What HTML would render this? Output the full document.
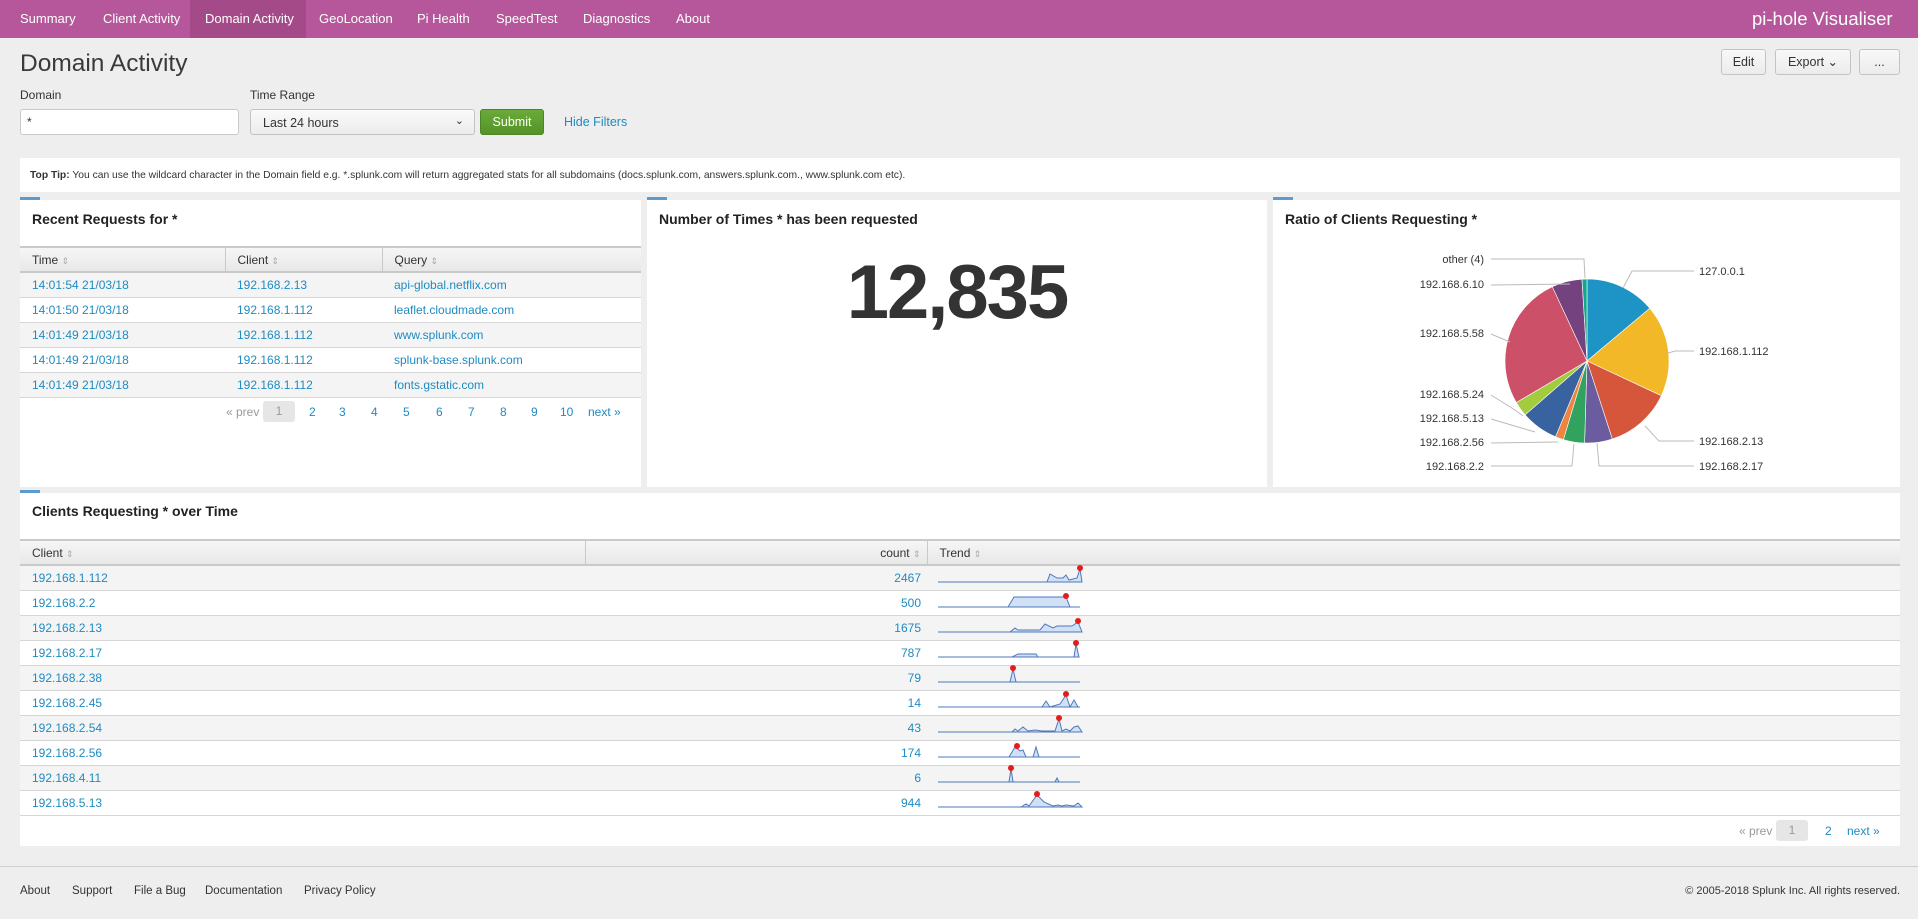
<!DOCTYPE html>
<html><head><meta charset="utf-8"><style>
*{margin:0;padding:0;box-sizing:border-box}
body{width:1918px;height:919px;background:#eeeeee;font-family:"Liberation Sans",sans-serif;color:#333;position:relative;overflow:hidden}
.a{position:absolute;white-space:nowrap}
.nav{left:0;top:0;width:1918px;height:38px;background:#b5579a}
.nav span{position:absolute;top:0;line-height:38px;color:#fff;font-size:13px}
.btn{position:absolute;border:1px solid #c3c3c3;border-radius:3px;background:linear-gradient(#f8f8f8,#ececec);font-size:12.5px;text-align:center;line-height:25px;color:#333}
.panel{position:absolute;background:#fff}
.panel:before{content:"";position:absolute;left:0;top:-3px;width:20px;height:3px;background:#5c9bd0}
.pt{position:absolute;left:12px;font-weight:bold;font-size:14px;color:#222}
.lnk{color:#1e8bc3}
table{border-collapse:collapse;position:absolute;font-size:12px}
th{height:25px;text-align:left;font-weight:normal;background:linear-gradient(#f6f6f6,#e8e8e8);border-top:2px solid #c9c9c9;border-bottom:2px solid #c9c9c9;border-left:1px solid #c9c9c9;color:#333;padding-left:12px}
th:first-child{border-left:none}
td{height:25px;border-bottom:1px solid #d6d6d6;color:#1e8bc3;padding-left:12px}
tr:nth-child(even) td{background:#f4f4f4}
.s{color:#aaa;font-size:9px}
.pg{position:absolute;font-size:12px;color:#1e8bc3}
.pg .c{position:absolute;top:-4px;width:32px;height:21px;background:#e6e6e6;border-radius:3px;color:#999;text-align:center;line-height:21px}
.foot span{position:absolute;top:885px;font-size:11.5px;color:#333}
</style></head><body>
<div class="a nav">
<div class="a" style="left:190px;top:0;width:116px;height:38px;background:#a54a89"></div>
<span style="left:20px">Summary</span>
<span style="left:103px">Client Activity</span>
<span style="left:205px">Domain Activity</span>
<span style="left:319px">GeoLocation</span>
<span style="left:417px">Pi Health</span>
<span style="left:496px">SpeedTest</span>
<span style="left:583px">Diagnostics</span>
<span style="left:676px">About</span>
<span style="left:1752px;font-size:18.5px">pi-hole Visualiser</span>
</div>
<div class="a" style="left:20px;top:50px;font-size:24.5px;color:#3a3a3a;font-weight:300">Domain Activity</div>
<div class="btn" style="left:1721px;top:49px;width:45px;height:26px">Edit</div>
<div class="btn" style="left:1775px;top:49px;width:76px;height:26px">Export &#8964;</div>
<div class="btn" style="left:1859px;top:49px;width:41px;height:26px">...</div>
<div class="a" style="left:20px;top:88px;font-size:12px">Domain</div>
<div class="a" style="left:250px;top:88px;font-size:12px">Time Range</div>
<div class="a" style="left:20px;top:109px;width:219px;height:26px;background:#fff;border:1px solid #c9c9c9;border-radius:3px;font-size:12px;padding:5px 6px">*</div>
<div class="a" style="left:250px;top:109px;width:225px;height:26px;background:linear-gradient(#fafafa,#ececec);border:1px solid #c3c3c3;border-radius:3px;font-size:12.5px;padding:6px 12px">Last 24 hours<span style="position:absolute;right:10px;top:4px;font-size:11px">&#8964;</span></div>
<div class="a" style="left:480px;top:109px;width:64px;height:26px;background:linear-gradient(#6aab3a,#559328);border:1px solid #4a8526;border-radius:3px;color:#fff;font-size:12.5px;text-align:center;line-height:24px">Submit</div>
<div class="a lnk" style="left:564px;top:115px;font-size:12.5px">Hide Filters</div>
<div class="a" style="left:20px;top:158px;width:1880px;height:34px;background:#fff;font-size:10.3px;padding:12px 10px;color:#333"><b>Top Tip:</b> You can use the wildcard character in the Domain field e.g. *.splunk.com will return aggregated stats for all subdomains (docs.splunk.com, answers.splunk.com., www.splunk.com etc).</div>

<div class="panel" style="left:20px;top:200px;width:621px;height:287px">
<div class="pt" style="top:11px">Recent Requests for *</div>
<table style="left:0;top:46px;width:621px">
<tr><th style="width:205px">Time <span class="s">&#8661;</span></th><th style="width:157px">Client <span class="s">&#8661;</span></th><th>Query <span class="s">&#8661;</span></th></tr>
<tr><td>14:01:54 21/03/18</td><td>192.168.2.13</td><td>api-global.netflix.com</td></tr>
<tr><td>14:01:50 21/03/18</td><td>192.168.1.112</td><td>leaflet.cloudmade.com</td></tr>
<tr><td>14:01:49 21/03/18</td><td>192.168.1.112</td><td>www.splunk.com</td></tr>
<tr><td>14:01:49 21/03/18</td><td>192.168.1.112</td><td>splunk-base.splunk.com</td></tr>
<tr><td>14:01:49 21/03/18</td><td>192.168.1.112</td><td>fonts.gstatic.com</td></tr>
</table>
<div class="pg" style="left:0;top:205px;width:621px">
<span class="a" style="left:206px;color:#999">« prev</span>
<span class="c" style="left:243px">1</span>
<span class="a" style="left:289px">2</span><span class="a" style="left:319px">3</span><span class="a" style="left:351px">4</span><span class="a" style="left:383px">5</span><span class="a" style="left:416px">6</span><span class="a" style="left:448px">7</span><span class="a" style="left:480px">8</span><span class="a" style="left:511px">9</span><span class="a" style="left:540px">10</span><span class="a" style="left:568px">next »</span>
</div>
</div>

<div class="panel" style="left:647px;top:200px;width:620px;height:287px">
<div class="pt" style="top:11px">Number of Times * has been requested</div>
<div class="a" style="left:0;width:620px;text-align:center;top:49px;font-size:76px;font-weight:bold;letter-spacing:-2px;color:#333">12,835</div>
</div>

<div class="panel" style="left:1273px;top:200px;width:627px;height:287px">
<div class="pt" style="top:11px">Ratio of Clients Requesting *</div>
<svg class="a" style="left:0;top:-2px" width="627" height="289" viewBox="0 0 627 289">
<g stroke="#fff" stroke-width="0.6">
<path d="M314,163 L314,81 A82,82 0 0 1 376.8,110.3Z" fill="#1e93c6"/>
<path d="M314,163 L376.8,110.3 A82,82 0 0 1 388.3,197.7Z" fill="#f2b827"/>
<path d="M314,163 L388.3,197.7 A82,82 0 0 1 339.3,241Z" fill="#d6563c"/>
<path d="M314,163 L339.3,241 A82,82 0 0 1 311.6,245Z" fill="#6a5c9e"/>
<path d="M314,163 L311.6,245 A82,82 0 0 1 290.4,241.6Z" fill="#31a35f"/>
<path d="M314,163 L290.4,241.6 A82,82 0 0 1 282.5,238.7Z" fill="#ed8440"/>
<path d="M314,163 L282.5,238.7 A82,82 0 0 1 252.1,216.8Z" fill="#3863a0"/>
<path d="M314,163 L252.1,216.8 A82,82 0 0 1 243.3,204.5Z" fill="#a2cc3e"/>
<path d="M314,163 L243.3,204.5 A82,82 0 0 1 279.3,88.7Z" fill="#cc5068"/>
<path d="M314,163 L279.3,88.7 A82,82 0 0 1 309,81.2Z" fill="#73427f"/>
<path d="M314,163 L309,81.2 A82,82 0 0 1 314,81Z" fill="#11a88b"/>
</g>
<g stroke="#bbb" stroke-width="1" fill="none">
<polyline points="218,61 311,61 312,80"/>
<polyline points="218,87 297,86"/>
<polyline points="218,136 237,144"/>
<polyline points="218,197 242,212 250,218"/>
<polyline points="218,221 262,234"/>
<polyline points="218,245 285,244"/>
<polyline points="218,268 299,268 301,246"/>
<polyline points="421,73 359,73 350,90"/>
<polyline points="421,153 402,153 392,156"/>
<polyline points="421,243 386,243 372,228"/>
<polyline points="421,268 326,268 324,245"/>
</g>
<g font-family="Liberation Sans,sans-serif" font-size="11" fill="#333">
<text x="211" y="65" text-anchor="end">other (4)</text>
<text x="211" y="90" text-anchor="end">192.168.6.10</text>
<text x="211" y="139" text-anchor="end">192.168.5.58</text>
<text x="211" y="200" text-anchor="end">192.168.5.24</text>
<text x="211" y="224" text-anchor="end">192.168.5.13</text>
<text x="211" y="248" text-anchor="end">192.168.2.56</text>
<text x="211" y="272" text-anchor="end">192.168.2.2</text>
<text x="426" y="77">127.0.0.1</text>
<text x="426" y="157">192.168.1.112</text>
<text x="426" y="247">192.168.2.13</text>
<text x="426" y="272">192.168.2.17</text>
</g>
</svg>
</div>

<div class="panel" style="left:20px;top:493px;width:1880px;height:353px">
<div class="pt" style="top:10px">Clients Requesting * over Time</div>
<table style="left:0;top:46px;width:1880px">
<tr><th style="width:565px">Client <span class="s">&#8661;</span></th><th style="width:342px;text-align:right;padding-right:6px">count <span class="s">&#8661;</span></th><th>Trend <span class="s">&#8661;</span></th></tr>
<tr><td>192.168.1.112</td><td style="text-align:right;padding-right:6px">2467</td><td></td></tr>
<tr><td>192.168.2.2</td><td style="text-align:right;padding-right:6px">500</td><td></td></tr>
<tr><td>192.168.2.13</td><td style="text-align:right;padding-right:6px">1675</td><td></td></tr>
<tr><td>192.168.2.17</td><td style="text-align:right;padding-right:6px">787</td><td></td></tr>
<tr><td>192.168.2.38</td><td style="text-align:right;padding-right:6px">79</td><td></td></tr>
<tr><td>192.168.2.45</td><td style="text-align:right;padding-right:6px">14</td><td></td></tr>
<tr><td>192.168.2.54</td><td style="text-align:right;padding-right:6px">43</td><td></td></tr>
<tr><td>192.168.2.56</td><td style="text-align:right;padding-right:6px">174</td><td></td></tr>
<tr><td>192.168.4.11</td><td style="text-align:right;padding-right:6px">6</td><td></td></tr>
<tr><td>192.168.5.13</td><td style="text-align:right;padding-right:6px">944</td><td></td></tr>
</table>
<svg class="a" style="left:918px;top:71px" width="150" height="252" viewBox="0 0 150 252">
<g fill="#cfe0f7" stroke="#4f78b8" stroke-width="1">
<g transform="translate(0,0)"><path d="M0,18 L109,18 L112,10 L119,14 L125,14 L128,11 L131,16 L139,14 L142,5 L144,18Z"/><circle cx="142" cy="4" r="3" fill="#e61b1b" stroke="none"/></g>
<g transform="translate(0,25)"><path d="M0,18 L70,18 L76,8 L128,8 L132,18 L142,18Z"/><circle cx="128" cy="7" r="3" fill="#e61b1b" stroke="none"/></g>
<g transform="translate(0,50)"><path d="M0,18 L72,18 L77,14 L80,16 L102,16 L107,10 L115,14 L119,12 L134,12 L140,8 L144,18Z"/><circle cx="140" cy="7" r="3" fill="#e61b1b" stroke="none"/></g>
<g transform="translate(0,75)"><path d="M0,18 L74,18 L80,15 L98,15 L100,18 L136,18 L138,5 L141,18Z"/><circle cx="138" cy="4" r="3" fill="#e61b1b" stroke="none"/></g>
<g transform="translate(0,100)"><path d="M0,18 L72,18 L75,5 L78,18 L142,18Z"/><circle cx="75" cy="4" r="3" fill="#e61b1b" stroke="none"/></g>
<g transform="translate(0,125)"><path d="M0,18 L104,18 L108,12 L112,18 L122,15 L128,6 L132,18 L136,11 L140,18 L142,18Z"/><circle cx="128" cy="5" r="3" fill="#e61b1b" stroke="none"/></g>
<g transform="translate(0,150)"><path d="M0,18 L74,18 L77,15 L80,17 L85,13 L90,17 L97,16 L104,17 L117,17 L121,5 L124,17 L128,15 L132,17 L136,13 L140,12 L144,18Z"/><circle cx="121" cy="4" r="3" fill="#e61b1b" stroke="none"/></g>
<g transform="translate(0,175)"><path d="M0,18 L71,18 L77,8 L82,12 L85,11 L88,18 L95,18 L98,8 L101,18 L142,18Z"/><circle cx="79" cy="7" r="3" fill="#e61b1b" stroke="none"/></g>
<g transform="translate(0,200)"><path d="M0,18 L71,18 L73,5 L75,18 L117,18 L119,14 L121,18 L142,18Z"/><circle cx="73" cy="4" r="3" fill="#e61b1b" stroke="none"/></g>
<g transform="translate(0,225)"><path d="M0,18 L83,18 L88,15 L91,17 L99,6 L106,13 L115,17 L120,16 L124,17 L128,16 L136,17 L140,14 L144,18Z"/><circle cx="99" cy="5" r="3" fill="#e61b1b" stroke="none"/></g>
</g>
</svg>
<div class="pg" style="left:0;top:331px;width:1880px">
<span class="a" style="left:1719px;color:#999">« prev</span>
<span class="c" style="left:1756px">1</span>
<span class="a" style="left:1805px">2</span>
<span class="a" style="left:1827px">next »</span>
</div>
</div>

<div class="a" style="left:0;top:866px;width:1918px;height:1px;background:#cfcfcf"></div>
<div class="foot">
<span style="left:20px">About</span>
<span style="left:72px">Support</span>
<span style="left:134px">File a Bug</span>
<span style="left:205px">Documentation</span>
<span style="left:304px">Privacy Policy</span>
<span style="right:18px;font-size:11px">© 2005-2018 Splunk Inc. All rights reserved.</span>
</div>
</body></html>
